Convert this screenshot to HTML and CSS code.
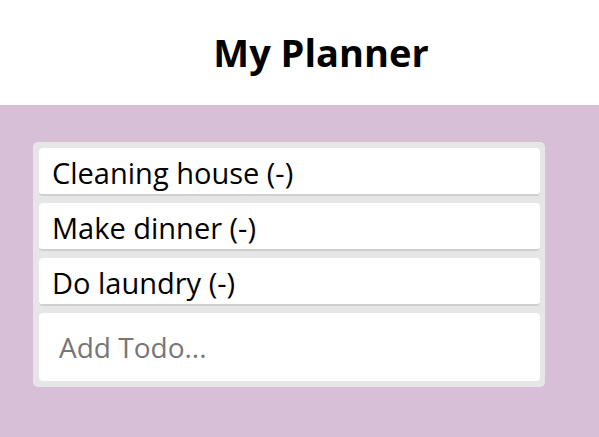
FILE: index.html
```html
<!DOCTYPE html>
<html>
<head>
<meta charset="utf-8">
<link rel="stylesheet" href="styles.css">
</head>
<body>
<header class="header">
  <h1 class="title">My Planner</h1>
</header>
<main class="board">
  <div class="list">
    <div class="item">Cleaning house (-)</div>
    <div class="item">Make dinner (-)</div>
    <div class="item">Do laundry (-)</div>
    <input class="add" type="text" placeholder="Add Todo...">
  </div>
</main>
</body>
</html>
```
FILE: styles.css
```css
html, body {
  margin: 0;
  padding: 0;
  height: 100%;
}
body {
  font-family: "Open Sans", "Noto Sans", sans-serif;
  background: #d8bfd8;
  display: flex;
  flex-direction: column;
}
.header {
  background: #fff;
  height: 105px;
  display: flex;
  align-items: center;
  justify-content: center;
  padding-left: 43px;
  padding-bottom: 2px;
  box-sizing: border-box;
}
.title {
  margin: 0;
  font-size: 38px;
  font-weight: 700;
  color: #000;
}
.board {
  flex: 1;
  padding: 37px 55px 0 33px;
}
.list {
  width: 512px;
  box-sizing: border-box;
  background: #e6e6e6;
  border-radius: 5px;
  padding: 6px 5px 6px 6px;
  display: flex;
  flex-direction: column;
  gap: 7px;
}
.item {
  background: #fff;
  border-radius: 4px;
  height: 48px;
  box-sizing: border-box;
  border-bottom: 2px solid #cfcfcf;
  padding: 2px 13px 0;
  display: flex;
  align-items: center;
  font-size: 29px;
  color: #000;
}
.add {
  height: 68px;
  box-sizing: border-box;
  border: none;
  border-radius: 4px;
  background: #fff;
  padding: 0 20px;
  font-family: inherit;
  font-size: 28px;
  outline: none;
}
.add::placeholder {
  color: #767676;
}
```
